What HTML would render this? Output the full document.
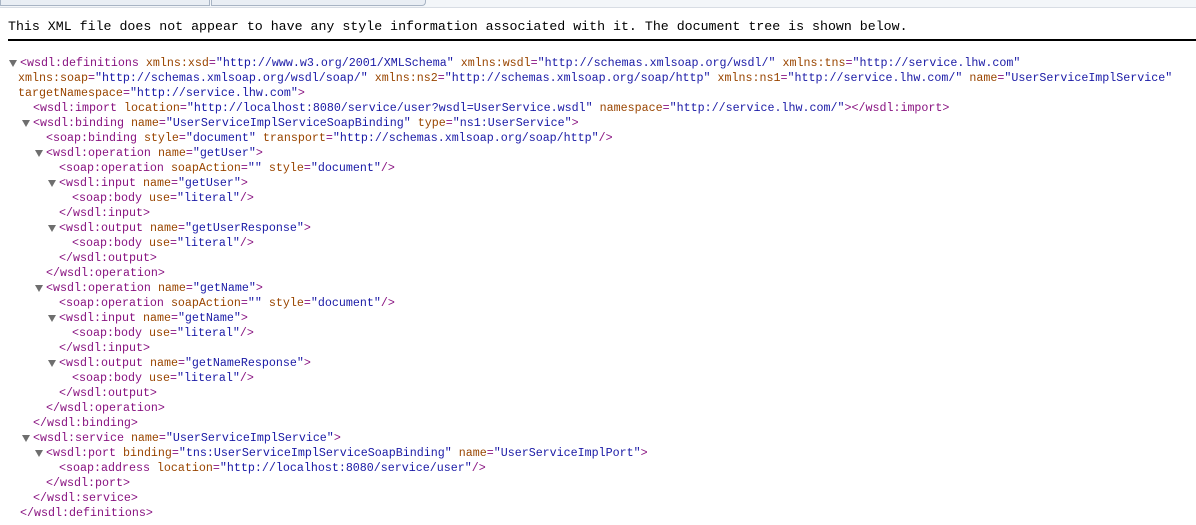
<!DOCTYPE html>
<html><head><meta charset="utf-8"><style>
html,body{margin:0;padding:0;background:#fff;width:1196px;height:525px;overflow:hidden}
.top{position:absolute;left:0;top:0;width:1196px;height:7px;background:#f3f6f9;border-bottom:1px solid #d8dde4}
.tab1{position:absolute;left:0;top:0;width:208px;height:5px;border:1px solid #a8b4c4;border-top:none;background:#e9eef4}
.tab2{position:absolute;left:211px;top:0;width:213px;height:5px;border:1px solid #a8b4c4;border-top:none;border-radius:0 0 4px 0;background:#e9eef4}
.hd{position:absolute;left:8px;top:18px;font:13.27px/18px "Liberation Mono",monospace;color:#000;white-space:pre}
.rule{position:absolute;left:8px;top:39px;width:1188px;height:2px;background:#000}
.code{position:absolute;left:0;top:56px;font:11.67px/15px "Liberation Mono",monospace}
.l{height:15px;position:relative;white-space:pre}
.t{color:#881280}.a{color:#994500}.v{color:#1a1aa6}
.tri{position:absolute;width:0;height:0;border-left:4px solid transparent;border-right:4px solid transparent;border-top:7px solid #6e6e6e;top:4px}
</style></head><body>
<div class="top"><div class="tab1"></div><div class="tab2"></div></div>
<div class="hd">This XML file does not appear to have any style information associated with it. The document tree is shown below.</div>
<div class="rule"></div>
<div class="code">
<div class="l" style="padding-left:20px"><span class="tri" style="left:9px"></span><span class="t">&lt;wsdl:definitions</span> <span class="a">xmlns:xsd</span><span class="t">=</span><span class="v">"http://www.w3.org/2001/XMLSchema"</span> <span class="a">xmlns:wsdl</span><span class="t">=</span><span class="v">"http://schemas.xmlsoap.org/wsdl/"</span> <span class="a">xmlns:tns</span><span class="t">=</span><span class="v">"http://service.lhw.com"</span></div>
<div class="l" style="padding-left:18px"><span class="a">xmlns:soap</span><span class="t">=</span><span class="v">"http://schemas.xmlsoap.org/wsdl/soap/"</span> <span class="a">xmlns:ns2</span><span class="t">=</span><span class="v">"http://schemas.xmlsoap.org/soap/http"</span> <span class="a">xmlns:ns1</span><span class="t">=</span><span class="v">"http://service.lhw.com/"</span> <span class="a">name</span><span class="t">=</span><span class="v">"UserServiceImplService"</span></div>
<div class="l" style="padding-left:18px"><span class="a">targetNamespace</span><span class="t">=</span><span class="v">"http://service.lhw.com"</span><span class="t">&gt;</span></div>
<div class="l" style="padding-left:33px"><span class="t">&lt;wsdl:import</span> <span class="a">location</span><span class="t">=</span><span class="v">"http://localhost:8080/service/user?wsdl=UserService.wsdl"</span> <span class="a">namespace</span><span class="t">=</span><span class="v">"http://service.lhw.com/"</span><span class="t">&gt;&lt;/wsdl:import&gt;</span></div>
<div class="l" style="padding-left:33px"><span class="tri" style="left:22px"></span><span class="t">&lt;wsdl:binding</span> <span class="a">name</span><span class="t">=</span><span class="v">"UserServiceImplServiceSoapBinding"</span> <span class="a">type</span><span class="t">=</span><span class="v">"ns1:UserService"</span><span class="t">&gt;</span></div>
<div class="l" style="padding-left:46px"><span class="t">&lt;soap:binding</span> <span class="a">style</span><span class="t">=</span><span class="v">"document"</span> <span class="a">transport</span><span class="t">=</span><span class="v">"http://schemas.xmlsoap.org/soap/http"</span><span class="t">/&gt;</span></div>
<div class="l" style="padding-left:46px"><span class="tri" style="left:35px"></span><span class="t">&lt;wsdl:operation</span> <span class="a">name</span><span class="t">=</span><span class="v">"getUser"</span><span class="t">&gt;</span></div>
<div class="l" style="padding-left:59px"><span class="t">&lt;soap:operation</span> <span class="a">soapAction</span><span class="t">=</span><span class="v">""</span> <span class="a">style</span><span class="t">=</span><span class="v">"document"</span><span class="t">/&gt;</span></div>
<div class="l" style="padding-left:59px"><span class="tri" style="left:48px"></span><span class="t">&lt;wsdl:input</span> <span class="a">name</span><span class="t">=</span><span class="v">"getUser"</span><span class="t">&gt;</span></div>
<div class="l" style="padding-left:72px"><span class="t">&lt;soap:body</span> <span class="a">use</span><span class="t">=</span><span class="v">"literal"</span><span class="t">/&gt;</span></div>
<div class="l" style="padding-left:59px"><span class="t">&lt;/wsdl:input&gt;</span></div>
<div class="l" style="padding-left:59px"><span class="tri" style="left:48px"></span><span class="t">&lt;wsdl:output</span> <span class="a">name</span><span class="t">=</span><span class="v">"getUserResponse"</span><span class="t">&gt;</span></div>
<div class="l" style="padding-left:72px"><span class="t">&lt;soap:body</span> <span class="a">use</span><span class="t">=</span><span class="v">"literal"</span><span class="t">/&gt;</span></div>
<div class="l" style="padding-left:59px"><span class="t">&lt;/wsdl:output&gt;</span></div>
<div class="l" style="padding-left:46px"><span class="t">&lt;/wsdl:operation&gt;</span></div>
<div class="l" style="padding-left:46px"><span class="tri" style="left:35px"></span><span class="t">&lt;wsdl:operation</span> <span class="a">name</span><span class="t">=</span><span class="v">"getName"</span><span class="t">&gt;</span></div>
<div class="l" style="padding-left:59px"><span class="t">&lt;soap:operation</span> <span class="a">soapAction</span><span class="t">=</span><span class="v">""</span> <span class="a">style</span><span class="t">=</span><span class="v">"document"</span><span class="t">/&gt;</span></div>
<div class="l" style="padding-left:59px"><span class="tri" style="left:48px"></span><span class="t">&lt;wsdl:input</span> <span class="a">name</span><span class="t">=</span><span class="v">"getName"</span><span class="t">&gt;</span></div>
<div class="l" style="padding-left:72px"><span class="t">&lt;soap:body</span> <span class="a">use</span><span class="t">=</span><span class="v">"literal"</span><span class="t">/&gt;</span></div>
<div class="l" style="padding-left:59px"><span class="t">&lt;/wsdl:input&gt;</span></div>
<div class="l" style="padding-left:59px"><span class="tri" style="left:48px"></span><span class="t">&lt;wsdl:output</span> <span class="a">name</span><span class="t">=</span><span class="v">"getNameResponse"</span><span class="t">&gt;</span></div>
<div class="l" style="padding-left:72px"><span class="t">&lt;soap:body</span> <span class="a">use</span><span class="t">=</span><span class="v">"literal"</span><span class="t">/&gt;</span></div>
<div class="l" style="padding-left:59px"><span class="t">&lt;/wsdl:output&gt;</span></div>
<div class="l" style="padding-left:46px"><span class="t">&lt;/wsdl:operation&gt;</span></div>
<div class="l" style="padding-left:33px"><span class="t">&lt;/wsdl:binding&gt;</span></div>
<div class="l" style="padding-left:33px"><span class="tri" style="left:22px"></span><span class="t">&lt;wsdl:service</span> <span class="a">name</span><span class="t">=</span><span class="v">"UserServiceImplService"</span><span class="t">&gt;</span></div>
<div class="l" style="padding-left:46px"><span class="tri" style="left:35px"></span><span class="t">&lt;wsdl:port</span> <span class="a">binding</span><span class="t">=</span><span class="v">"tns:UserServiceImplServiceSoapBinding"</span> <span class="a">name</span><span class="t">=</span><span class="v">"UserServiceImplPort"</span><span class="t">&gt;</span></div>
<div class="l" style="padding-left:59px"><span class="t">&lt;soap:address</span> <span class="a">location</span><span class="t">=</span><span class="v">"http://localhost:8080/service/user"</span><span class="t">/&gt;</span></div>
<div class="l" style="padding-left:46px"><span class="t">&lt;/wsdl:port&gt;</span></div>
<div class="l" style="padding-left:33px"><span class="t">&lt;/wsdl:service&gt;</span></div>
<div class="l" style="padding-left:20px"><span class="t">&lt;/wsdl:definitions&gt;</span></div>
</div>
</body></html>
